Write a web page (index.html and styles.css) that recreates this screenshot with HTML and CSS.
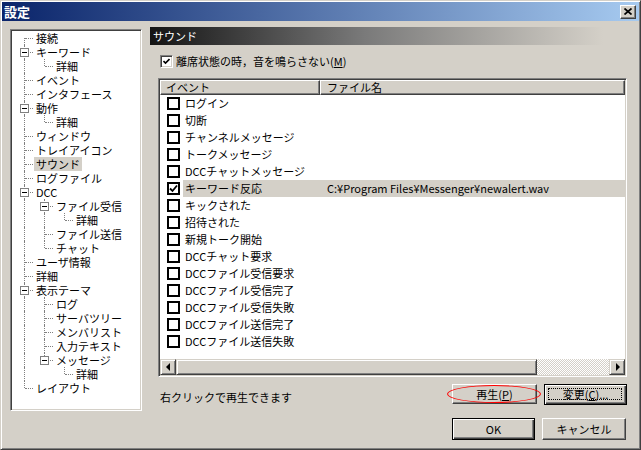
FILE: index.html
```html
<!DOCTYPE html>
<html>
  <head>
    <meta charset="utf-8" />
    <title>設定</title>
    <link rel="stylesheet" href="styles.css">
  </head>
  <body>
    <div class="window">
      <div class="titlebar">
        <span class="title">設定</span>
        <span class="close">
          <svg width="8" height="7" viewBox="0 0 8 7"><path d="M0.5 0.5 L7.5 6.5 M7.5 0.5 L0.5 6.5" stroke="#000" stroke-width="1.7" fill="none"/></svg>
        </span>
      </div>

      <div class="main">
        <ul class="tree">
          <li class="row"><span class="c f"></span><span class="label">接続</span></li>
          <li class="row"><span class="c t"><span class="exp"></span></span><span class="label">キーワード</span></li>
          <li class="row"><span class="c v"></span><span class="c l"></span><span class="label">詳細</span></li>
          <li class="row"><span class="c t"></span><span class="label">イベント</span></li>
          <li class="row"><span class="c t"></span><span class="label">インタフェース</span></li>
          <li class="row"><span class="c t"><span class="exp"></span></span><span class="label">動作</span></li>
          <li class="row"><span class="c v"></span><span class="c l"></span><span class="label">詳細</span></li>
          <li class="row"><span class="c t"></span><span class="label">ウィンドウ</span></li>
          <li class="row"><span class="c t"></span><span class="label">トレイアイコン</span></li>
          <li class="row"><span class="c t"></span><span class="label selected">サウンド</span></li>
          <li class="row"><span class="c t"></span><span class="label">ログファイル</span></li>
          <li class="row"><span class="c t"><span class="exp"></span></span><span class="label">DCC</span></li>
          <li class="row"><span class="c v"></span><span class="c t"><span class="exp"></span></span><span class="label">ファイル受信</span></li>
          <li class="row"><span class="c v"></span><span class="c v"></span><span class="c l"></span><span class="label">詳細</span></li>
          <li class="row"><span class="c v"></span><span class="c t"></span><span class="label">ファイル送信</span></li>
          <li class="row"><span class="c v"></span><span class="c l"></span><span class="label">チャット</span></li>
          <li class="row"><span class="c t"></span><span class="label">ユーザ情報</span></li>
          <li class="row"><span class="c t"></span><span class="label">詳細</span></li>
          <li class="row"><span class="c t"><span class="exp"></span></span><span class="label">表示テーマ</span></li>
          <li class="row"><span class="c v"></span><span class="c t"></span><span class="label">ログ</span></li>
          <li class="row"><span class="c v"></span><span class="c t"></span><span class="label">サーバツリー</span></li>
          <li class="row"><span class="c v"></span><span class="c t"></span><span class="label">メンバリスト</span></li>
          <li class="row"><span class="c v"></span><span class="c t"></span><span class="label">入力テキスト</span></li>
          <li class="row"><span class="c v"></span><span class="c l"><span class="exp"></span></span><span class="label">メッセージ</span></li>
          <li class="row"><span class="c v"></span><span class="c"></span><span class="c l"></span><span class="label">詳細</span></li>
          <li class="row"><span class="c l"></span><span class="label">レイアウト</span></li>
        </ul>

        <div class="panel">
          <div class="panel-head">サウンド</div>

          <label class="check-row">
            <span class="check">
              <svg width="7" height="7" viewBox="0 0 7 7"><path d="M0.5 3 L2.5 5 L6.5 1" stroke="#000" stroke-width="1.6" fill="none"/></svg>
            </span>
            <span>離席状態の時，音を鳴らさない(<u>M</u>)</span>
          </label>

          <div class="list">
            <div class="list-head">
              <div class="col col-event">イベント</div>
              <div class="col col-file">ファイル名</div>
            </div>
            <ul class="list-body">
              <li class="item"><span class="box"></span><span class="cells"><span class="ev">ログイン</span><span class="file"></span></span></li>
              <li class="item"><span class="box"></span><span class="cells"><span class="ev">切断</span><span class="file"></span></span></li>
              <li class="item"><span class="box"></span><span class="cells"><span class="ev">チャンネルメッセージ</span><span class="file"></span></span></li>
              <li class="item"><span class="box"></span><span class="cells"><span class="ev">トークメッセージ</span><span class="file"></span></span></li>
              <li class="item"><span class="box"></span><span class="cells"><span class="ev">DCCチャットメッセージ</span><span class="file"></span></span></li>
              <li class="item"><span class="box on"><svg width="9" height="9" viewBox="0 0 9 9"><path d="M1 4.5 L3.5 7 L8 1.5" stroke="#000" stroke-width="1.8" fill="none"/></svg></span><span class="cells selected"><span class="ev">キーワード反応</span><span class="file">C:¥Program Files¥Messenger¥newalert.wav</span></span></li>
              <li class="item"><span class="box"></span><span class="cells"><span class="ev">キックされた</span><span class="file"></span></span></li>
              <li class="item"><span class="box"></span><span class="cells"><span class="ev">招待された</span><span class="file"></span></span></li>
              <li class="item"><span class="box"></span><span class="cells"><span class="ev">新規トーク開始</span><span class="file"></span></span></li>
              <li class="item"><span class="box"></span><span class="cells"><span class="ev">DCCチャット要求</span><span class="file"></span></span></li>
              <li class="item"><span class="box"></span><span class="cells"><span class="ev">DCCファイル受信要求</span><span class="file"></span></span></li>
              <li class="item"><span class="box"></span><span class="cells"><span class="ev">DCCファイル受信完了</span><span class="file"></span></span></li>
              <li class="item"><span class="box"></span><span class="cells"><span class="ev">DCCファイル受信失敗</span><span class="file"></span></span></li>
              <li class="item"><span class="box"></span><span class="cells"><span class="ev">DCCファイル送信完了</span><span class="file"></span></span></li>
              <li class="item"><span class="box"></span><span class="cells"><span class="ev">DCCファイル送信失敗</span><span class="file"></span></span></li>
            </ul>
            <div class="hscroll">
              <span class="sb-btn"><span class="arrow-left"></span></span>
              <span class="sb-thumb"></span>
              <span class="sb-track"></span>
              <span class="sb-btn"><span class="arrow-right"></span></span>
            </div>
          </div>

          <div class="actions">
            <span class="hint">右クリックで再生できます</span>
            <span class="btn-wrap">
              <button class="btn btn-play">再生(<u>P</u>)</button>
              <span class="mark"></span>
            </button>
            </span>
            <button class="btn btn-change default focus">変更(<u>C</u>)...</button>
          </div>
        </div>
      </div>

      <div class="footer">
        <button class="btn btn-ok default">OK</button>
        <button class="btn btn-cancel">キャンセル</button>
      </div>
    </div>
  </body>
</html>
```

FILE: styles.css
```css
body {
  margin: 0;
  background: #d4d0c8;
  font-family: "Noto Sans CJK JP", sans-serif;
  font-size: 11px;
  color: #000;
}

.window {
  width: 641px;
  height: 450px;
  box-sizing: border-box;
  background: #d4d0c8;
  border: 1px solid;
  border-color: #d4d0c8 #404040 #404040 #d4d0c8;
  box-shadow: inset 1px 1px #fff, inset -1px -1px #808080;
  padding: 1px;
  display: flex;
  flex-direction: column;
}

/* title bar */
.titlebar {
  height: 19px;
  display: flex;
  align-items: center;
  padding: 0 3px 0 2px;
  background: linear-gradient(to right, #0a246a, #a6caf0);
}
.title {
  color: #fff;
  font-size: 13px;
  font-weight: bold;
  line-height: 19px;
}
.close {
  margin-left: auto;
  width: 16px;
  height: 14px;
  box-sizing: border-box;
  display: flex;
  align-items: center;
  justify-content: center;
  background: #d4d0c8;
  border: 1px solid;
  border-color: #fff #404040 #404040 #fff;
  box-shadow: inset -1px -1px #808080;
}

.main {
  display: flex;
  gap: 8px;
  padding: 6px 12px 0 8px;
}

/* tree */
.tree {
  width: 132px;
  height: 382px;
  box-sizing: border-box;
  margin: 2px 0 0;
  padding: 1px 0 0 3px;
  list-style: none;
  background: #fff;
  border: 1px solid;
  border-color: #808080 #fff #fff #808080;
  box-shadow: inset 1px 1px #404040, inset -1px -1px #d4d0c8;
  overflow: hidden;
}
.row {
  display: flex;
  height: 14px;
  line-height: 14px;
  white-space: nowrap;
}
.c {
  position: relative;
  flex: none;
  width: 20px;
  height: 14px;
}
.c::before, .c::after {
  content: "";
  position: absolute;
}
.c.v::before, .c.t::before {
  left: 10px;
  top: 0;
  bottom: 0;
  border-left: 1px dotted #808080;
}
.c.l::before {
  left: 10px;
  top: 0;
  height: 7px;
  border-left: 1px dotted #808080;
}
.c.f::before {
  left: 10px;
  top: 7px;
  bottom: 0;
  border-left: 1px dotted #808080;
}
.c.t::after, .c.l::after, .c.f::after {
  left: 11px;
  top: 7px;
  width: 8px;
  border-top: 1px dotted #808080;
}
.exp {
  position: absolute;
  z-index: 1;
  left: 6px;
  top: 3px;
  width: 9px;
  height: 9px;
  box-sizing: border-box;
  background: #fff;
  border: 1px solid #808080;
}
.exp::before {
  content: "";
  position: absolute;
  left: 1px;
  top: 3px;
  width: 5px;
  height: 1px;
  background: #000;
}
.label {
  padding: 0 2px;
}
.label.selected {
  background: #d4d0c8;
}

/* right panel */
.panel {
  width: 477px;
  display: flex;
  flex-direction: column;
}
.panel-head {
  height: 18px;
  line-height: 18px;
  padding-left: 3px;
  color: #fff;
  background: linear-gradient(to right, #141414, #7a7a7a 45%, #d4d0c8 95%);
}
.check-row {
  margin-top: 9px;
  height: 14px;
  display: flex;
  align-items: center;
  padding-left: 10px;
  line-height: 14px;
}
.check {
  width: 13px;
  height: 13px;
  box-sizing: border-box;
  margin-right: 3px;
  display: flex;
  align-items: center;
  justify-content: center;
  background: #fff;
  border: 1px solid;
  border-color: #808080 #fff #fff #808080;
  box-shadow: inset 1px 1px #404040, inset -1px -1px #d4d0c8;
}

.list {
  margin: 10px 0 0 8px;
  width: 469px;
  height: 299px;
  box-sizing: border-box;
  padding: 1px;
  display: flex;
  flex-direction: column;
  background: #fff;
  border: 1px solid;
  border-color: #808080 #fff #fff #808080;
  box-shadow: inset 1px 1px #404040, inset -1px -1px #d4d0c8;
}
.list-head {
  display: flex;
  height: 15px;
}
.col {
  box-sizing: border-box;
  height: 15px;
  line-height: 13px;
  padding-left: 5px;
  background: #d4d0c8;
  border: 1px solid;
  border-color: #fff #404040 #404040 #fff;
  box-shadow: inset -1px -1px #808080;
}
.col-event {
  width: 160px;
}
.col-file {
  flex: 1;
  padding-left: 6px;
}
.list-body {
  flex: 1;
  margin: 0;
  padding: 0;
  list-style: none;
}
.item {
  display: flex;
  align-items: center;
  height: 17px;
  white-space: nowrap;
}
.box {
  width: 13px;
  height: 13px;
  box-sizing: border-box;
  margin-left: 7px;
  display: flex;
  align-items: center;
  justify-content: center;
  background: #fff;
  border: 2px solid #000;
}
.cells {
  flex: 1;
  display: flex;
  height: 17px;
  line-height: 17px;
  margin-left: 3px;
}
.cells.selected {
  background: #d4d0c8;
}
.ev {
  width: 137px;
  padding-left: 2px;
  box-sizing: border-box;
}
.file {
  padding-left: 7px;
}

/* horizontal scrollbar */
.hscroll {
  display: flex;
  height: 16px;
}
.sb-btn, .sb-thumb {
  box-sizing: border-box;
  height: 16px;
  background: #d4d0c8;
  border: 1px solid;
  border-color: #d4d0c8 #404040 #404040 #d4d0c8;
  box-shadow: inset 1px 1px #fff, inset -1px -1px #808080;
}
.sb-btn {
  width: 16px;
  display: flex;
  align-items: center;
  justify-content: center;
}
.sb-thumb {
  width: 361px;
}
.sb-track {
  flex: 1;
  background-color: #fff;
  background-image: conic-gradient(#d4d0c8 25%, #fff 0 50%, #d4d0c8 0 75%, #fff 0);
  background-size: 2px 2px;
}
.arrow-left, .arrow-right {
  width: 0;
  height: 0;
  border-top: 4px solid transparent;
  border-bottom: 4px solid transparent;
}
.arrow-left {
  border-right: 4px solid #000;
  margin-right: 1px;
}
.arrow-right {
  border-left: 4px solid #000;
  margin-left: 1px;
}

/* buttons */
.actions {
  margin-top: 7px;
  height: 20px;
  display: flex;
  align-items: center;
  gap: 7px;
}
.hint {
  padding-left: 10px;
  margin-top: 6px;
}
.btn-wrap {
  position: relative;
  margin-left: auto;
  display: flex;
}
.btn {
  position: relative;
  box-sizing: border-box;
  height: 20px;
  padding: 0;
  font: inherit;
  font-size: 11px;
  line-height: 16px;
  color: #000;
  background: #d4d0c8;
  border: 1px solid;
  border-color: #fff #404040 #404040 #fff;
  box-shadow: inset -1px -1px #808080;
}
.btn.default {
  border: 1px solid #000;
  box-shadow: inset 1px 1px #fff, inset -1px -1px #404040, inset -2px -2px #808080;
}
.btn.focus::after {
  content: "";
  position: absolute;
  left: 3px;
  top: 3px;
  right: 4px;
  bottom: 4px;
  border: 1px dotted #000;
}
.btn-play {
  width: 85px;
}
.btn-change {
  width: 83px;
  height: 21px;
}
.mark {
  position: absolute;
  left: -5px;
  top: 1px;
  width: 94px;
  height: 18px;
  box-sizing: border-box;
  border: 1px solid #f00;
  border-radius: 50%;
}

.footer {
  margin-top: 7px;
  display: flex;
  justify-content: flex-end;
  gap: 7px;
  padding-right: 13px;
}
.btn-ok {
  width: 83px;
  height: 22px;
}
.btn-cancel {
  width: 84px;
  height: 22px;
}
```
